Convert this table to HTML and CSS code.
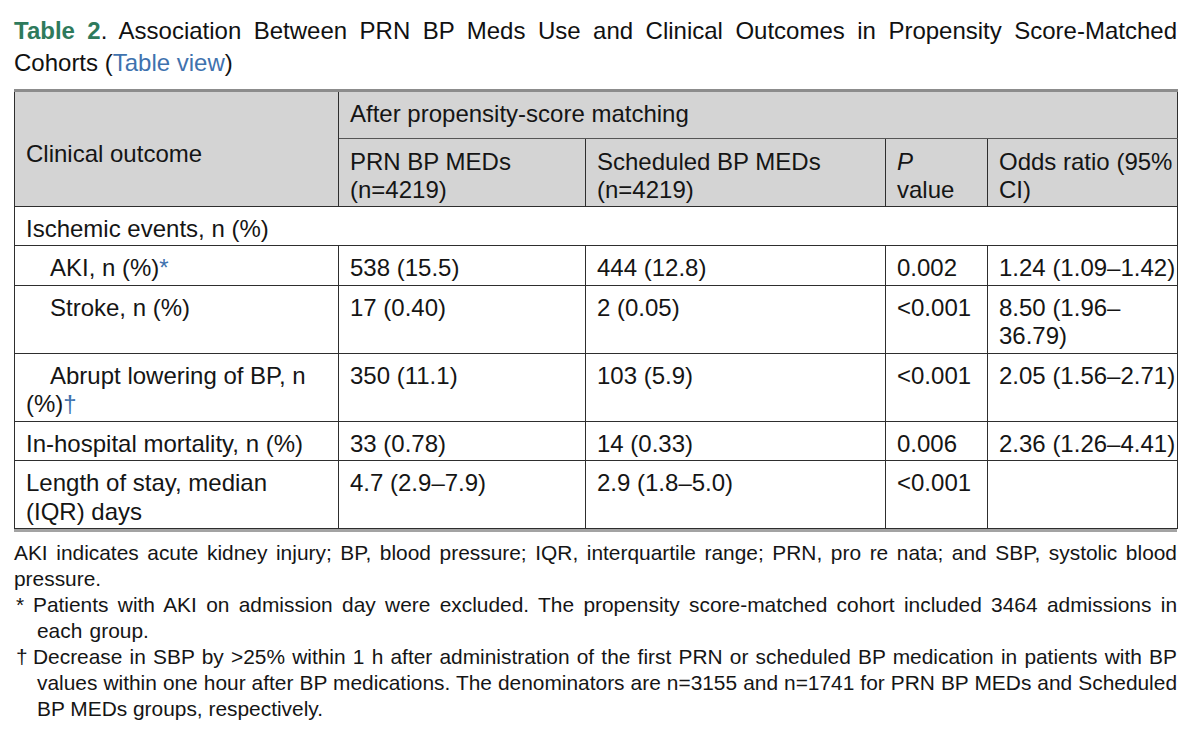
FILE: index.html
```html
<!DOCTYPE html>
<html lang="en">
<head>
<meta charset="utf-8">
<title>Table 2</title>
<link rel="stylesheet" href="styles.css">
</head>
<body>
<div class="page">
  <p class="title"><span class="label">Table 2</span>. Association Between PRN BP Meds Use and Clinical Outcomes in Propensity Score-Matched Cohorts (<a class="link" href="#">Table view</a>)</p>
  <div class="table-wrap">
    <table class="data">
      <colgroup>
        <col class="c1"><col class="c2"><col class="c3"><col class="c4"><col class="c5">
      </colgroup>
      <thead>
        <tr class="top">
          <th rowspan="2" class="outcome">Clinical outcome</th>
          <th colspan="4" class="group">After propensity-score matching</th>
        </tr>
        <tr class="sub">
          <th>PRN BP MEDs<br>(n=4219)</th>
          <th>Scheduled BP MEDs<br>(n=4219)</th>
          <th><i>P</i><br>value</th>
          <th>Odds ratio (95%<br>CI)</th>
        </tr>
      </thead>
      <tbody>
        <tr><td colspan="5">Ischemic events, n (%)</td></tr>
        <tr><td class="ind">AKI, n (%)<span class="ref">*</span></td><td>538 (15.5)</td><td>444 (12.8)</td><td>0.002</td><td>1.24 (1.09–1.42)</td></tr>
        <tr><td class="ind">Stroke, n (%)</td><td>17 (0.40)</td><td>2 (0.05)</td><td>&lt;0.001</td><td>8.50 (1.96–<br>36.79)</td></tr>
        <tr><td class="ind">Abrupt lowering of BP, n<br>(%)<span class="ref">†</span></td><td>350 (11.1)</td><td>103 (5.9)</td><td>&lt;0.001</td><td>2.05 (1.56–2.71)</td></tr>
        <tr><td>In-hospital mortality, n (%)</td><td>33 (0.78)</td><td>14 (0.33)</td><td>0.006</td><td>2.36 (1.26–4.41)</td></tr>
        <tr><td>Length of stay, median<br>(IQR) days</td><td>4.7 (2.9–7.9)</td><td>2.9 (1.8–5.0)</td><td>&lt;0.001</td><td></td></tr>
      </tbody>
    </table>
  </div>
  <div class="notes">
    <p class="note">AKI indicates acute kidney injury; BP, blood pressure; IQR, interquartile range; PRN, pro re nata; and SBP, systolic blood pressure.</p>
    <p class="note fn fn-wide"><span class="mk">*</span>Patients with AKI on admission day were excluded. The propensity score-matched cohort included 3464 admissions in each group.</p>
    <p class="note fn"><span class="mk">†</span>Decrease in SBP by &gt;25% within 1 h after administration of the first PRN or scheduled BP medication in patients with BP values within one hour after BP medications. The denominators are n=3155 and n=1741 for PRN BP MEDs and Scheduled BP MEDs groups, respectively.</p>
  </div>
</div>
</body>
</html>
```
FILE: styles.css
```css
html, body {
  margin: 0;
  padding: 0;
  background: #ffffff;
}

body {
  font-family: "Liberation Sans", Arial, Helvetica, sans-serif;
  color: #151515;
}

.page {
  width: 1163px;
  margin-left: 14px;
  padding-top: 15px;
}

.title {
  margin: 0;
  font-size: 24px;
  line-height: 32px;
  text-align: justify;
  color: #111111;
}

.label {
  font-weight: bold;
  color: #2e7a5c;
}

.link {
  color: #3f72ae;
  text-decoration: none;
}

.table-wrap {
  margin-top: 10px;
  border-bottom: 3px solid #a3a3a3;
}

.data {
  width: 1163px;
  table-layout: fixed;
  border-collapse: collapse;
  font-size: 24px;
  line-height: 28.5px;
  border-top: 3px solid #8c8c8c;
}

.c1 { width: 324px; }
.c2 { width: 247px; }
.c3 { width: 300px; }
.c4 { width: 102px; }
.c5 { width: 190px; }

.data th,
.data td {
  border: 1px solid #2e2e2e;
  text-align: left;
  vertical-align: top;
  white-space: nowrap;
  font-weight: normal;
}

.data th {
  background: #d4d4d4;
}

.data tr.top th {
  padding: 8px 4px 9px 11px;
}

.data tr.top th.group {
  border-bottom-color: #555555;
}

.data tr.top th.outcome {
  vertical-align: middle;
  padding: 10px 4px 0 11px;
}

.data tr.sub th {
  padding: 9px 4px 1px 11px;
}

.data td {
  padding: 8px 4px 2px 11px;
  background: #ffffff;
}

.data td.ind {
  text-indent: 24px;
}

.ref {
  color: #3f72ae;
}

.notes {
  margin-top: 8px;
}

.note {
  margin: 0;
  font-size: 20.9px;
  line-height: 26px;
  text-align: justify;
  color: #151515;
}

.fn {
  padding-left: 23px;
}

.fn-wide {
  word-spacing: 1.5px;
}

.fn .mk {
  display: inline-block;
  width: 17px;
  margin-left: -21px;
}
```
